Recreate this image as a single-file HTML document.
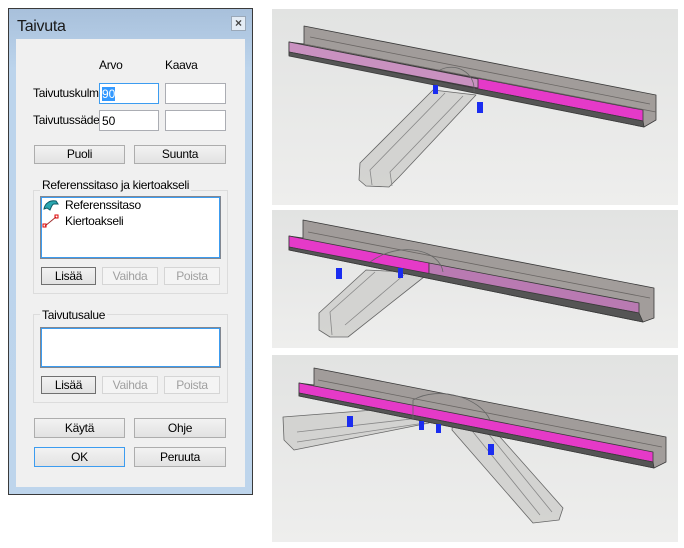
<!DOCTYPE html>
<html><head><meta charset="utf-8"><style>
*{box-sizing:border-box;margin:0;padding:0}
body{width:684px;height:548px;background:#fff;position:relative;overflow:hidden;font-family:"Liberation Sans",sans-serif;font-size:12px;color:#000}
.a{position:absolute}
#dlg{left:8px;top:8px;width:245px;height:487px;border:1px solid #3a3a3a;background:linear-gradient(#a8c0db,#bcd4ec 60px,#bed5ec)}
#client{left:16px;top:39px;width:229px;height:448px;background:#f0f0f0}
.t{position:absolute;font-size:12px;white-space:nowrap;letter-spacing:-0.3px}
.in{position:absolute;background:#fff;border:1px solid #abadb3;height:21px;font-size:12px;padding:3px 2px}
.btn{position:absolute;border:1px solid #adadad;background:linear-gradient(#f2f2f2,#e2e2e2);text-align:center;font-size:12px;line-height:17px;letter-spacing:-0.3px}
.dis{color:#a0a0a0;border-color:#d5d5d5;background:#f4f4f4}
.gb{position:absolute;border:1px solid #dcdcdc}
.lb{position:absolute;background:#fff;border:1px solid #828790;box-shadow:inset 0 0 0 1px #3c9cf0}
.pn{position:absolute;left:272px;width:406px;background:linear-gradient(#e2e3e2,#eeeeed)}
</style></head><body>
<div id="dlg" class="a"></div>
<div class="t" style="left:17px;top:18px;font-size:16px;color:#1a1a1a">Taivuta</div>
<div class="a" style="left:231px;top:16px;width:15px;height:15px;border:1px solid #9aa8b8;background:#e4ecf5;font-size:12px;line-height:12px;text-align:center;color:#444;font-weight:bold">×</div>
<div id="client" class="a"></div>
<div class="t" style="left:99px;top:58px">Arvo</div>
<div class="t" style="left:165px;top:58px">Kaava</div>
<div class="t" style="left:33px;top:86px;width:66px;overflow:hidden">Taivutuskulma</div>
<div class="t" style="left:33px;top:113px;width:66px;overflow:hidden">Taivutussäde</div>
<div class="in" style="left:99px;top:83px;width:60px;border-color:#3c9cf0"><span style="background:#3399ff;color:#fff">90</span></div>
<div class="in" style="left:165px;top:83px;width:61px"></div>
<div class="in" style="left:99px;top:110px;width:60px">50</div>
<div class="in" style="left:165px;top:110px;width:61px"></div>
<div class="btn" style="left:34px;top:145px;width:91px;height:19px">Puoli</div>
<div class="btn" style="left:134px;top:145px;width:92px;height:19px">Suunta</div>
<div class="gb" style="left:33px;top:190px;width:195px;height:104px"></div>
<div class="t" style="left:40px;top:178px;background:#f0f0f0;padding:0 2px">Referenssitaso ja kiertoakseli</div>
<div class="lb" style="left:40px;top:196px;width:181px;height:63px"></div>
<svg class="a" style="left:42px;top:198px" width="20" height="30"><path d="M2 11 C3 5 8 2 14 3 L16 6 L12 6 C10 6 9 10 8 12 L5 10 Z" fill="#2aa7b0" stroke="#0b5a66" stroke-width="1"/><path d="M3 28 L14 19" stroke="#a03030" stroke-width="1"/><rect x="1" y="26" width="3" height="3" fill="none" stroke="#d00"/><rect x="13" y="17" width="3" height="3" fill="none" stroke="#d00"/></svg>
<div class="t" style="left:65px;top:198px">Referenssitaso</div>
<div class="t" style="left:65px;top:214px">Kiertoakseli</div>
<div class="btn" style="left:41px;top:267px;width:55px;height:18px;border-color:#707070">Lisää</div>
<div class="btn dis" style="left:102px;top:267px;width:56px;height:18px">Vaihda</div>
<div class="btn dis" style="left:164px;top:267px;width:56px;height:18px">Poista</div>
<div class="gb" style="left:33px;top:314px;width:195px;height:89px"></div>
<div class="t" style="left:40px;top:308px;background:#f0f0f0;padding:0 2px">Taivutusalue</div>
<div class="lb" style="left:40px;top:327px;width:181px;height:41px"></div>
<div class="btn" style="left:41px;top:376px;width:55px;height:18px;border-color:#707070">Lisää</div>
<div class="btn dis" style="left:102px;top:376px;width:56px;height:18px">Vaihda</div>
<div class="btn dis" style="left:164px;top:376px;width:56px;height:18px">Poista</div>
<div class="btn" style="left:34px;top:418px;width:91px;height:20px;line-height:18px">Käytä</div>
<div class="btn" style="left:134px;top:418px;width:92px;height:20px;line-height:18px">Ohje</div>
<div class="btn" style="left:34px;top:447px;width:91px;height:20px;line-height:18px;border-color:#3c9cf0">OK</div>
<div class="btn" style="left:134px;top:447px;width:92px;height:20px;line-height:18px">Peruuta</div>

<div class="pn" style="top:9px;height:196px"></div>
<div class="pn" style="top:210px;height:138px"></div>
<div class="pn" style="top:355px;height:187px"></div>
<svg class="a" style="left:0;top:0" width="684" height="548">
<g stroke="#3a3a3a" stroke-width="0.8" stroke-linejoin="round">
<!-- panel 1 -->
<polygon points="433,90 476,95 399,177 389,187 366,186 359,180 360,163" fill="#cfcfcd" fill-opacity="0.85" stroke="#666"/>
<path d="M445 93 L370 170 L372 185 M463 96 L390 172 L392 186" fill="none" stroke="#888"/>
<polygon points="304,26 656,95 656,120 644,127 289,55 289,42 304,44" fill="#9b9694" fill-opacity="0.92"/>
<polygon points="289,42 643,110 643,121 289,52" fill="#e53ac8"/>
<polygon points="289,42 478,79 478,88 289,52" fill="#c991c0"/>
<polygon points="289,52 643,121 644,127 289,56" fill="#555"/>
<path d="M310 37 L650 104 M304 44 L656 112" fill="none" stroke="#6a6664"/>
<path d="M440 70 C455 62 476 72 474 92" fill="none" stroke="#666"/>
<rect x="433" y="85" width="5" height="9" fill="#1a2cf0" stroke="none"/>
<rect x="477" y="102" width="6" height="11" fill="#1a2cf0" stroke="none"/>
<!-- panel 2 -->
<polygon points="366,270 429,273 348,337 330,337 319,330 319,313" fill="#cfcfcd" fill-opacity="0.85" stroke="#666"/>
<path d="M375 272 L330 312 L332 335 M405 274 L345 325" fill="none" stroke="#888"/>
<polygon points="303,220 654,288 654,318 643,322 289,250 289,236 303,238" fill="#9b9694" fill-opacity="0.92"/>
<polygon points="289,236 429,263 429,275 289,247" fill="#e53ac8"/>
<polygon points="429,263 639,303 639,313 429,275" fill="#b97ab2"/>
<polygon points="289,247 639,313 643,322 289,250" fill="#555"/>
<path d="M308 232 L650 298" fill="none" stroke="#6a6664"/>
<path d="M370 262 C400 240 440 250 443 272" fill="none" stroke="#666"/>
<rect x="336" y="268" width="6" height="11" fill="#1a2cf0" stroke="none"/>
<rect x="398" y="268" width="5" height="10" fill="#1a2cf0" stroke="none"/>
<!-- panel 3 -->
<polygon points="413,407 283,417 284,440 294,450 429,423" fill="#cfcfcd" fill-opacity="0.85" stroke="#666"/>
<path d="M297 432 L420 418 M297 442 L425 423" fill="none" stroke="#888"/>
<polygon points="453,420 485,420 563,508 559,520 533,523 452,430" fill="#cfcfcd" fill-opacity="0.85" stroke="#666"/>
<path d="M465 422 L540 515 M478 421 L552 512" fill="none" stroke="#888"/>
<polygon points="314,368 666,437 666,462 654,468 299,396 299,383 314,385" fill="#9b9694" fill-opacity="0.92"/>
<polygon points="299,383 653,452 653,462 299,393" fill="#e53ac8"/>
<polygon points="299,393 653,462 654,468 299,396" fill="#555"/>
<path d="M318 380 L662 447" fill="none" stroke="#6a6664"/>
<path d="M413 420 L413 400 C440 385 480 398 490 420" fill="none" stroke="#666"/>
<rect x="347" y="416" width="6" height="11" fill="#1a2cf0" stroke="none"/>
<rect x="419" y="421" width="5" height="9" fill="#1a2cf0" stroke="none"/>
<rect x="436" y="424" width="5" height="9" fill="#1a2cf0" stroke="none"/>
<rect x="488" y="444" width="6" height="11" fill="#1a2cf0" stroke="none"/>
</g>
</svg>
</body></html>
